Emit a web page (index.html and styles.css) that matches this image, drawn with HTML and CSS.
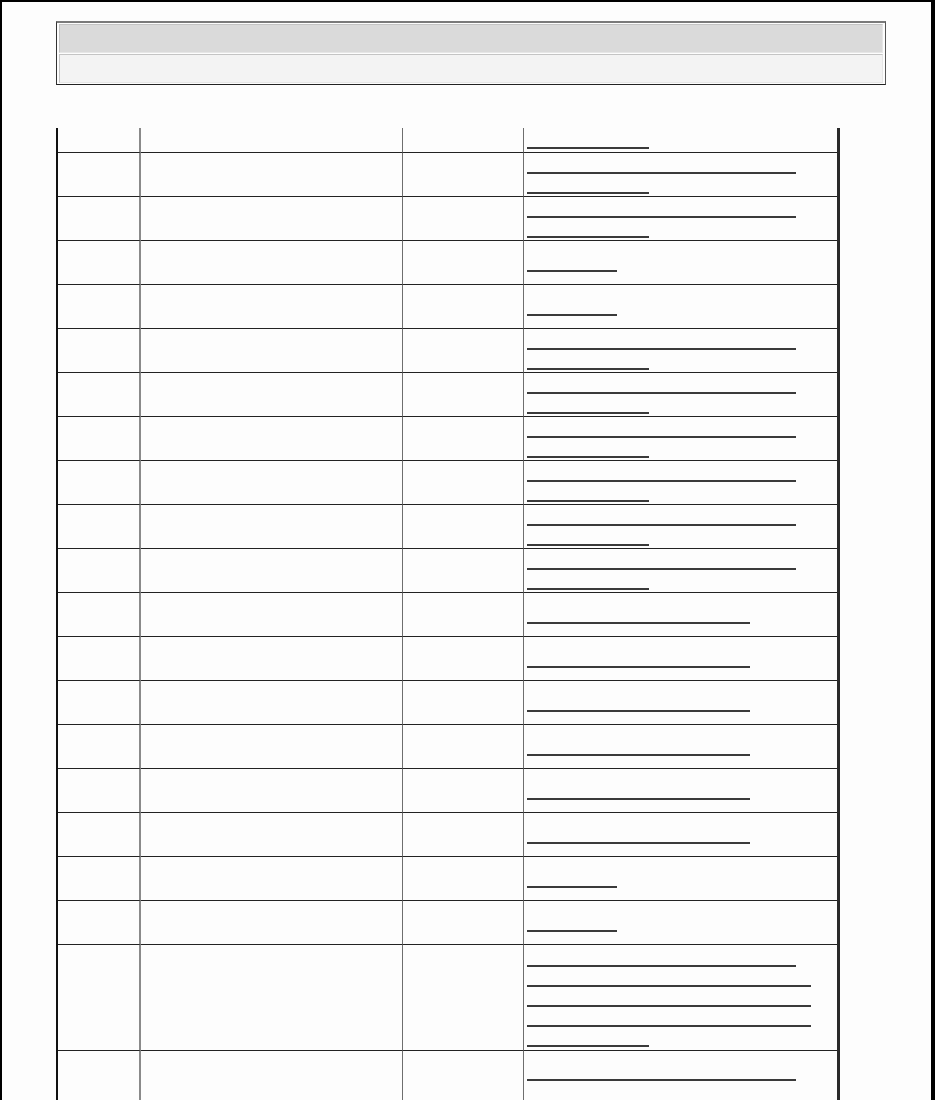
FILE: index.html
```html
<!DOCTYPE html>
<html lang="en">
<head>
<meta charset="utf-8">
<title>Page</title>
<link rel="stylesheet" href="styles.css">
</head>
<body>
<div class="page">
  <div class="header-box">
    <div class="hcell hcell-dark"></div>
    <div class="hcell hcell-light"></div>
  </div>

  <table class="grid">
    <colgroup>
      <col class="c1"><col class="c2"><col class="c3"><col class="c4">
    </colgroup>
    <tbody>
      <tr class="row-first"><td></td><td></td><td></td><td><div class="ln"><span class="lk w-m"></span></div></td></tr>
      <tr><td></td><td></td><td></td><td><div class="ln"><span class="lk w-xl"></span></div><div class="ln"><span class="lk w-m"></span></div></td></tr>
      <tr><td></td><td></td><td></td><td><div class="ln"><span class="lk w-xl"></span></div><div class="ln"><span class="lk w-m"></span></div></td></tr>
      <tr><td></td><td></td><td></td><td><div class="ln"><span class="lk w-s"></span></div></td></tr>
      <tr><td></td><td></td><td></td><td><div class="ln"><span class="lk w-s"></span></div></td></tr>
      <tr><td></td><td></td><td></td><td><div class="ln"><span class="lk w-xl"></span></div><div class="ln"><span class="lk w-m"></span></div></td></tr>
      <tr><td></td><td></td><td></td><td><div class="ln"><span class="lk w-xl"></span></div><div class="ln"><span class="lk w-m"></span></div></td></tr>
      <tr><td></td><td></td><td></td><td><div class="ln"><span class="lk w-xl"></span></div><div class="ln"><span class="lk w-m"></span></div></td></tr>
      <tr><td></td><td></td><td></td><td><div class="ln"><span class="lk w-xl"></span></div><div class="ln"><span class="lk w-m"></span></div></td></tr>
      <tr><td></td><td></td><td></td><td><div class="ln"><span class="lk w-xl"></span></div><div class="ln"><span class="lk w-m"></span></div></td></tr>
      <tr><td></td><td></td><td></td><td><div class="ln"><span class="lk w-xl"></span></div><div class="ln"><span class="lk w-m"></span></div></td></tr>
      <tr><td></td><td></td><td></td><td><div class="ln"><span class="lk w-l"></span></div></td></tr>
      <tr><td></td><td></td><td></td><td><div class="ln"><span class="lk w-l"></span></div></td></tr>
      <tr><td></td><td></td><td></td><td><div class="ln"><span class="lk w-l"></span></div></td></tr>
      <tr><td></td><td></td><td></td><td><div class="ln"><span class="lk w-l"></span></div></td></tr>
      <tr><td></td><td></td><td></td><td><div class="ln"><span class="lk w-l"></span></div></td></tr>
      <tr><td></td><td></td><td></td><td><div class="ln"><span class="lk w-l"></span></div></td></tr>
      <tr><td></td><td></td><td></td><td><div class="ln"><span class="lk w-s"></span></div></td></tr>
      <tr><td></td><td></td><td></td><td><div class="ln"><span class="lk w-s"></span></div></td></tr>
      <tr class="row-tall"><td></td><td></td><td></td><td>
        <div class="ln"><span class="lk w-xl"></span></div>
        <div class="ln"><span class="lk w-xxl"></span></div>
        <div class="ln"><span class="lk w-xxl"></span></div>
        <div class="ln"><span class="lk w-xxl"></span></div>
        <div class="ln"><span class="lk w-m"></span></div>
      </td></tr>
      <tr class="row-last"><td></td><td></td><td></td><td><div class="ln"><span class="lk w-xl"></span></div></td></tr>
    </tbody>
  </table>
</div>
</body>
</html>
```

FILE: styles.css
```css
html, body {
  margin: 0;
  padding: 0;
  background: #ffffff;
  font-family: "Liberation Serif", "Times New Roman", serif;
  font-size: 16px;
}

.page {
  width: 935px;
  min-height: 1100px;
  box-sizing: border-box;
  border-top: 2px solid #000;
  border-left: 2px solid #000;
  border-right: 4px solid #000;
  background: #fdfdfd;
  overflow: hidden;
}

/* header box */
.header-box {
  margin: 19px 0 0 54px;
  width: 830px;
  box-sizing: border-box;
  border-top: 2px solid #7a7a7a;
  border-left: 1px solid #333;
  border-right: 1px solid #555;
  border-bottom: 1px solid #222;
  padding: 1px 2px;
  display: flex;
  flex-direction: column;
  gap: 1px;
}

.hcell {
  height: 27px;
  border: 1px solid #c4c4c4;
  border-right-color: #e6e6e6;
  border-bottom-color: #e6e6e6;
}

.hcell-dark { background: #dadada; }
.hcell-light { background: #f3f3f3; }

/* main table */
.grid {
  margin: 43px 0 0 54px;
  border-collapse: separate;
  border-spacing: 0;
  table-layout: fixed;
  width: 784px;
  border-left: 2px solid #111;
  border-right: 3px solid #2a2a2a;
}

.c1 { width: 83px; }
.c2 { width: 262px; }
.c3 { width: 121px; }
.c4 { width: 313px; }

.grid td {
  height: 43px;
  padding: 0;
  vertical-align: middle;
  border-bottom: 1px solid #222;
  border-right: 1px solid #6e6e6e;
  box-sizing: content-box;
}

.grid td:first-child {
  border-right: 2px solid #8a8a8a;
}

.grid td:last-child {
  border-right: none;
  padding-left: 3px;
}

.grid .row-first td {
  height: 22px;
  vertical-align: bottom;
  padding-bottom: 2px;
}

.grid .row-tall td {
  height: 105px;
}

.grid .row-last td {
  height: 70px;
  vertical-align: top;
  padding-top: 11px;
}

.ln {
  height: 20px;
}

.lk {
  display: block;
  height: 17px;
  border-bottom: 2px solid #3a3a3a;
}

.w-s { width: 90px; }
.w-m { width: 122px; }
.w-l { width: 223px; }
.w-xl { width: 269px; }
.w-xxl { width: 284px; }
```
